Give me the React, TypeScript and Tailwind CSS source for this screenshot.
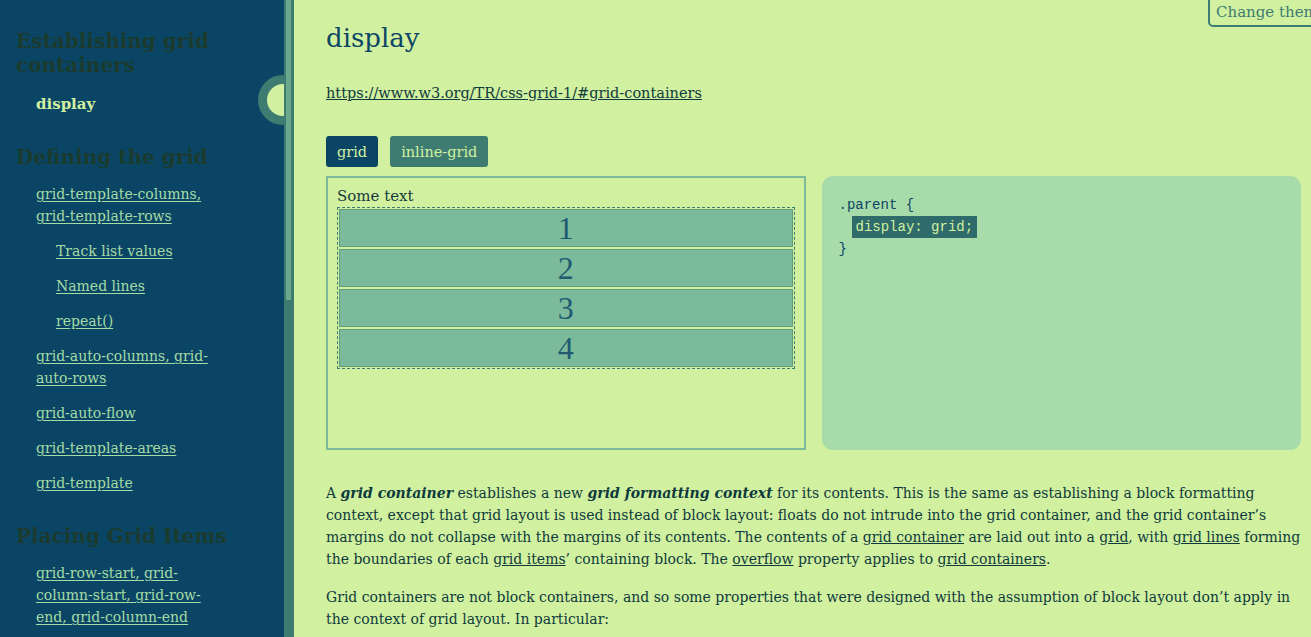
import React from "react";

const serif = { fontFamily: '"DejaVu Serif", Georgia, serif' };
const slab = { fontFamily: '"DejaVu Serif", serif' };

function SideLink({ children, sub }: { children: React.ReactNode; sub?: boolean }) {
  return (
    <li className={sub ? "pl-5" : ""}>
      <a href="#" className="text-[#a4dca4] underline underline-offset-2 decoration-1">
        {children}
      </a>
    </li>
  );
}

export default function App() {
  return (
    <div className="relative flex h-[637px] w-full overflow-hidden bg-[#d1f1a0]" style={serif}>
      <aside className="relative w-[284px] shrink-0 overflow-hidden bg-[#0b4566] pl-4 pr-[40px] pt-[29px]">
        <h2 className="text-[20px] font-bold leading-[24px] text-[#1a3b2d]" style={slab}>
          Establishing grid containers
        </h2>
        <ul className="mt-[16px] pl-5 text-[15px] leading-[22px]">
          <li className="font-bold text-[#d1f1a0]">display</li>
        </ul>
        <h2 className="mt-[30px] text-[20px] font-bold leading-[24px] text-[#1a3b2d]" style={slab}>
          Defining the grid
        </h2>
        <ul className="mr-[20px] mt-[14px] flex flex-col gap-[13px] pl-5 text-[14px] leading-[22px]">
          <SideLink>grid-template-columns, grid-template-rows</SideLink>
          <SideLink sub>Track list values</SideLink>
          <SideLink sub>Named lines</SideLink>
          <SideLink sub>repeat()</SideLink>
          <SideLink>grid-auto-columns, grid-auto-rows</SideLink>
          <SideLink>grid-auto-flow</SideLink>
          <SideLink>grid-template-areas</SideLink>
          <SideLink>grid-template</SideLink>
        </ul>
        <h2 className="mt-[30px] whitespace-nowrap text-[20px] font-bold leading-[24px] text-[#1a3b2d]" style={slab}>
          Placing Grid Items
        </h2>
        <ul className="mr-[20px] mt-[14px] flex flex-col gap-[13px] pl-5 text-[14px] leading-[22px]">
          <SideLink>grid-row-start, grid-column-start, grid-row-end, grid-column-end</SideLink>
        </ul>
        <div className="absolute left-[258px] top-[75px] h-[50px] w-[50px] rounded-full border-[9px] border-[#3e7c72] bg-[#d1f1a0]" />
      </aside>

      <div className="w-[10px] shrink-0 bg-[#3e7c72] pl-[2px]">
        <div className="h-[300px] w-[5px] bg-[#6aa98e]" />
      </div>

      <main className="flex-1 pl-8 pr-[10px] text-[14px] leading-[22px] text-[#0f3a3d]">
        <h1 className="mt-[20px] text-[26px] leading-[36px] text-[#0b4566]" style={slab}>
          display
        </h1>
        <p className="mt-[26px] text-[14.5px]">
          <a href="#" className="underline">https://www.w3.org/TR/css-grid-1/#grid-containers</a>
        </p>
        <div className="mt-[32px] flex gap-3">
          <button className="h-[31px] rounded-[3px] bg-[#0b4566] px-[11px] text-[14.5px] text-[#d1f1a0]">grid</button>
          <button className="h-[31px] rounded-[3px] bg-[#3e7c72] px-[11px] text-[14.5px] text-[#d1f1a0]">inline-grid</button>
        </div>
        <div className="mt-[9px] grid grid-cols-2 gap-4">
          <div className="h-[274px] border-2 border-[#7bbb9b] px-[9px] pt-[7px]">
            <div className="text-[15px] text-[#17393a]">Some text</div>
            <div className="grid gap-[2px] border border-dashed border-[#3e7c72] p-px">
              {[1, 2, 3, 4].map((n) => (
                <div
                  key={n}
                  className="flex h-[38px] items-center justify-center border border-[#5e9d7b] bg-[#7bbb9b] text-[32px] text-[#1f5a70]"
                  style={{ fontFamily: '"Liberation Serif", serif' }}
                >
                  {n}
                </div>
              ))}
            </div>
          </div>
          <div
            className="h-[274px] rounded-[11px] bg-[#a7dba9] px-[17px] pt-[18px] text-[14px] leading-[22px] text-[#0b4566]"
            style={{ fontFamily: '"Liberation Mono", monospace' }}
          >
            <div>.parent {"{"}</div>
            <div className="pl-[13px]">
              <span className="bg-[#2f6b6a] px-[4px] py-[3px] text-[#d1f1a0]">display: grid;</span>
            </div>
            <div>{"}"}</div>
          </div>
        </div>
        <p className="mt-[32px]">
          A <b><i>grid container</i></b> establishes a new <b><i>grid formatting context</i></b> for its contents. This is the
          same as establishing a block formatting context, except that grid layout is used instead of block layout: floats do
          not intrude into the grid container, and the grid container’s margins do not collapse with the margins of its
          contents. The contents of a <a href="#" className="underline">grid container</a> are laid out into a{" "}
          <a href="#" className="underline">grid</a>, with <a href="#" className="underline">grid lines</a> forming the
          boundaries of each <a href="#" className="underline">grid items</a>’ containing block. The{" "}
          <a href="#" className="underline">overflow</a> property applies to{" "}
          <a href="#" className="underline">grid containers</a>.
        </p>
        <p className="mt-[16px]">
          Grid containers are not block containers, and so some properties that were designed with the assumption of block
          layout don’t apply in the context of grid layout. In particular:
        </p>
      </main>

      <button className="absolute left-[1208px] top-[-2px] h-[29px] whitespace-nowrap rounded-bl-[5px] border-2 border-[#3e7c72] pl-[6px] pr-2 text-[15px] text-[#3e7c72]">
        Change theme
      </button>
    </div>
  );
}
